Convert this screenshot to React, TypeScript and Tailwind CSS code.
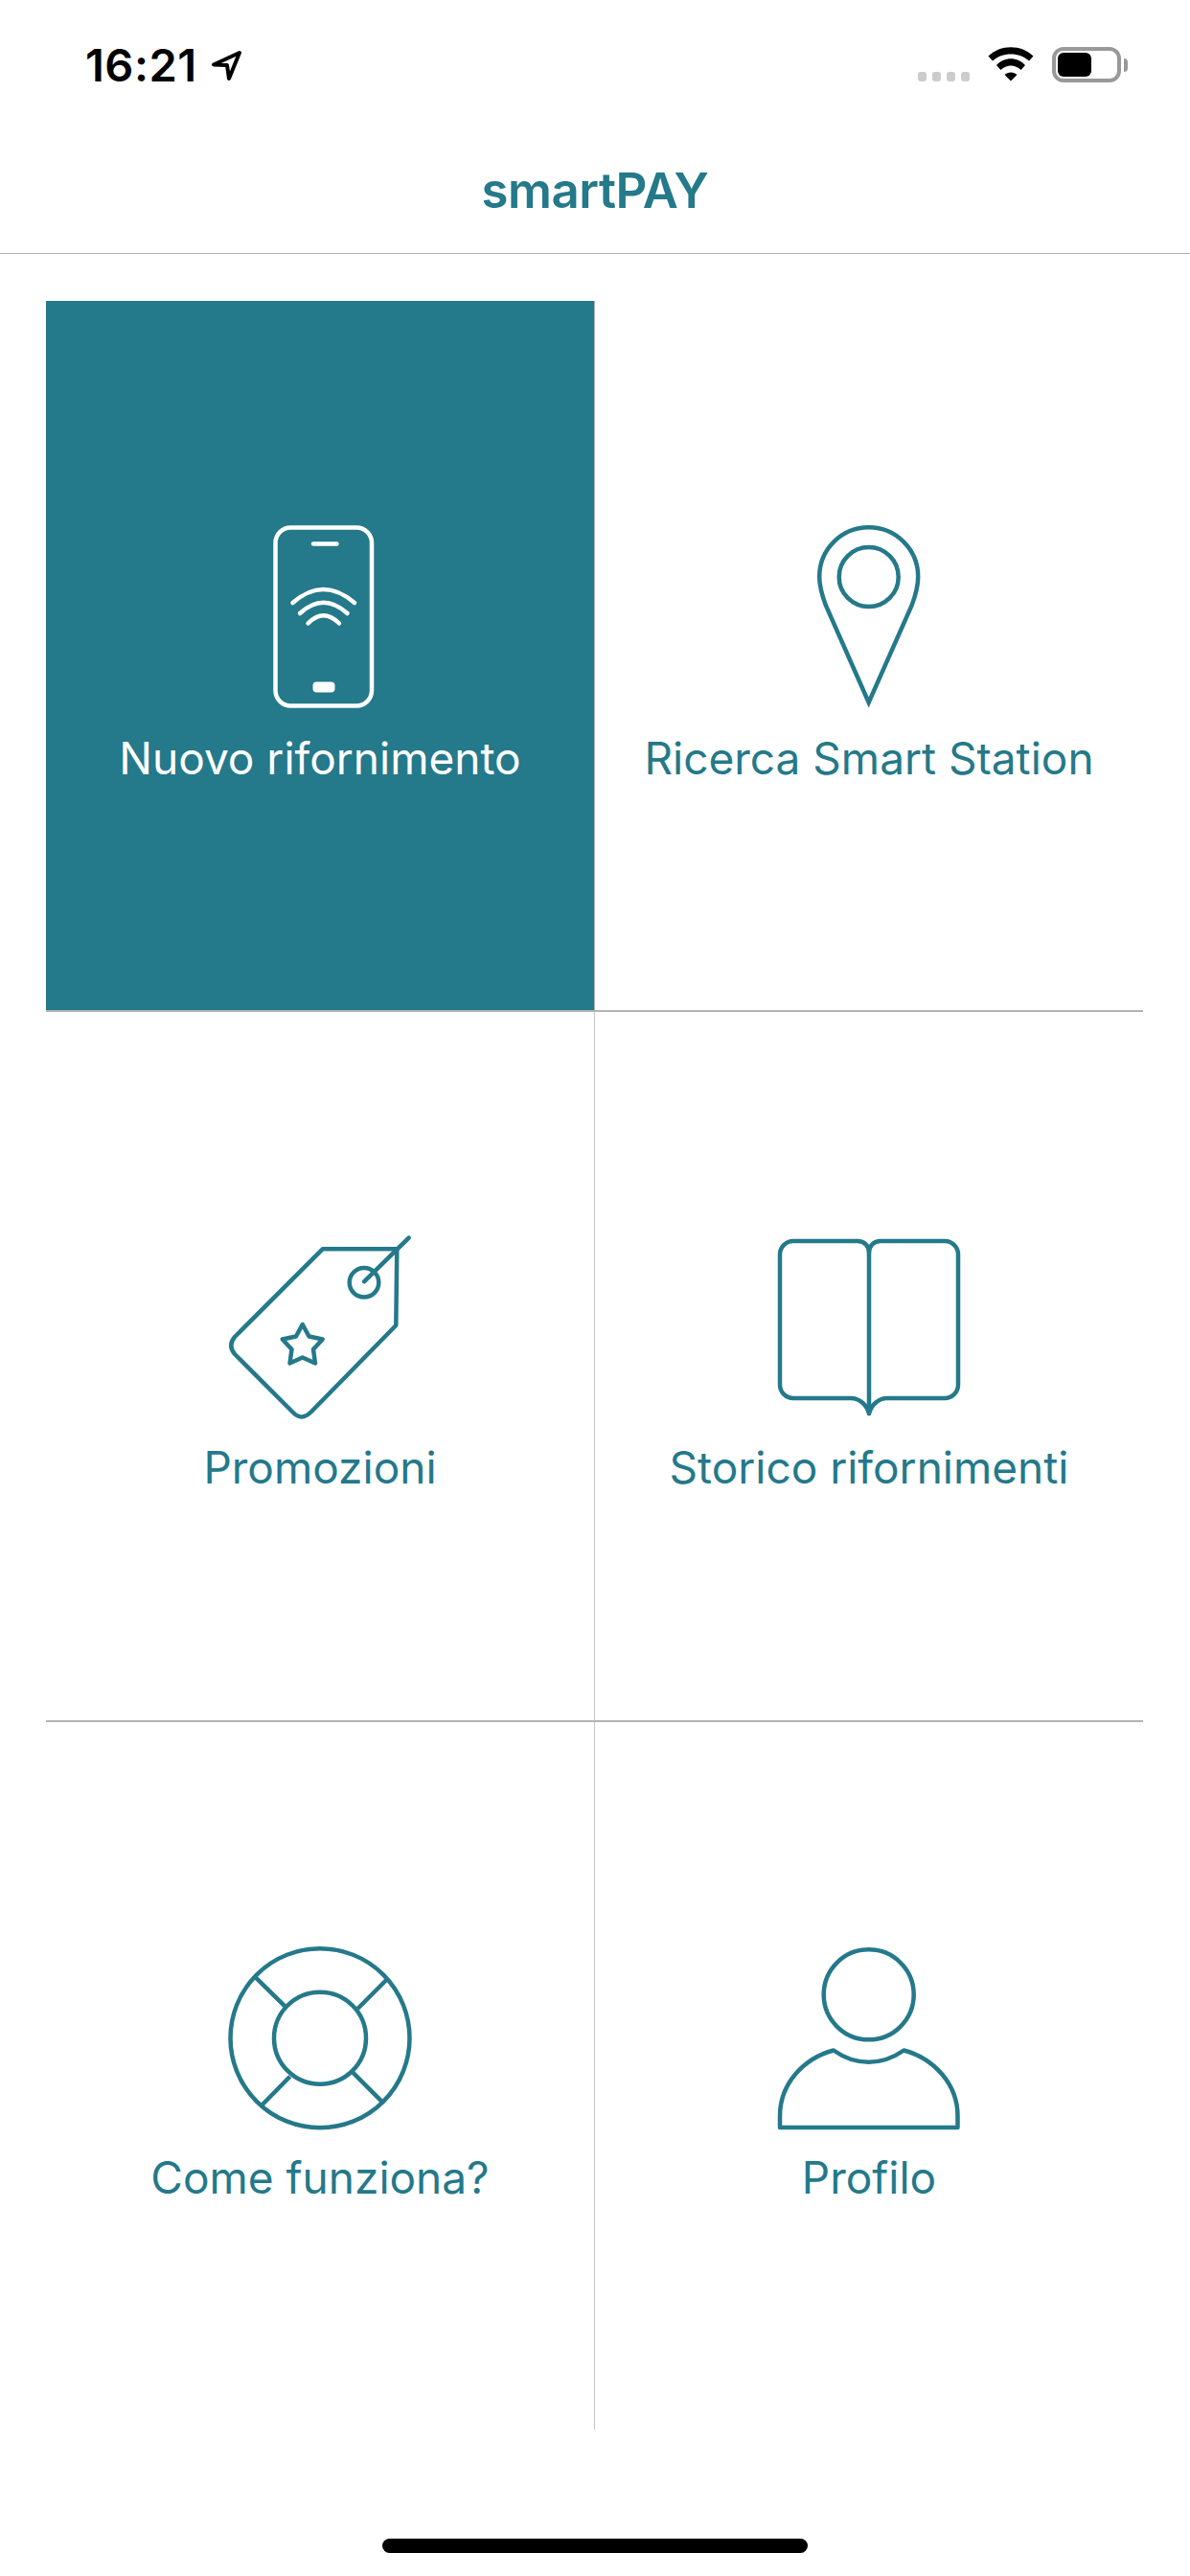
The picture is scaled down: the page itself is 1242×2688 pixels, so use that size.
import React from 'react';

const TEAL = '#24798a';

const Phone = () => (
  <svg width="240" height="240" viewBox="-26 -6 240 240" fill="none" stroke="#fff" strokeWidth="4.5" strokeLinecap="round">
    <rect x="47.5" y="30.5" width="100.5" height="186" rx="16" />
    <path d="M87 47.5H111.5" />
    <path d="M65.5 109Q97.5 81 130 109" />
    <path d="M73 120Q97.5 97.5 122.5 120" />
    <path d="M81.5 130.5Q97.5 114 114 130.5" />
    <rect x="86.5" y="191.5" width="23" height="11" rx="4" fill="#fff" stroke="none" />
  </svg>
);

const Pin = () => (
  <svg width="240" height="240" viewBox="-33 -6 240 240" fill="none" stroke={TEAL} strokeWidth="4.5" strokeLinejoin="miter">
    <path d="M86.7 213L42 112C37.5 100 35.2 92 35.2 81.7A51.5 51.5 0 0 1 138.2 81.7C138.2 92 136 100 131.5 112Z" />
    <circle cx="86.7" cy="82" r="31" />
  </svg>
);

const Tag = () => (
  <svg width="240" height="240" viewBox="-6 -16 240 240" fill="none" stroke={TEAL} strokeWidth="4.5" strokeLinecap="round" strokeLinejoin="round">
    <path d="M116.7 33.3H194.3L193.3 113L105 203C98 210 92 210 86 204L25 143C20 137 20 131 25 125Z" />
    <circle cx="160" cy="68.3" r="15.3" />
    <path d="M206.7 21.7L160 67.3" />
    <path d="M95.7 112L102.5 124.5L116.7 127.5L107 138L109 152.5L95.7 146.5L82.5 152.5L84.5 138L74.7 127.5L89 124.5Z" />
  </svg>
);

const Book = () => (
  <svg width="240" height="240" viewBox="-3 -16 240 240" fill="none" stroke={TEAL} strokeWidth="4.5" strokeLinecap="round" strokeLinejoin="round">
    <path d="M117 37C117 30 112 25 105 25H38A14 14 0 0 0 24 39V175A14 14 0 0 0 38 189H98C108 189 115 197 117 205C119 197 126 189 136 189H196A14 14 0 0 0 210 175V39A14 14 0 0 0 196 25H129C122 25 117 30 117 37Z" />
    <path d="M117 37V205" />
  </svg>
);

const Buoy = () => (
  <svg width="240" height="240" viewBox="-6 -15 240 240" fill="none" stroke={TEAL} strokeWidth="4.5">
    <circle cx="114" cy="116.7" r="93.5" />
    <circle cx="114" cy="116.7" r="48" />
    <path d="M46.7 53.3L77.3 83.3M183.3 56L153.3 86M82.7 156.7L54 186M148.3 152.7L178.3 182.7" />
  </svg>
);

const Person = () => (
  <svg width="240" height="240" viewBox="-3 -15 240 240" fill="none" stroke={TEAL} strokeWidth="4.5" strokeLinejoin="round">
    <circle cx="116.7" cy="71.3" r="47" />
    <path d="M24 198C24 165 48 138 80 129.5Q97 141.7 116.7 141.7Q136 141.7 153.3 129.5C185 138 209.5 165 209.5 198V210H24Z" />
  </svg>
);

const ITEMS = [
  { label: 'Nuovo rifornimento', icon: <Phone />, cls: 'pt-[200px] bg-[#24798a] text-white border-b-2 border-b-[#b3b3b3] border-r border-r-[#b3b3b3]' },
  { label: 'Ricerca Smart Station', icon: <Pin />, cls: 'pt-[200px] border-b-2 border-[#b3b3b3] text-[#24798a]' },
  { label: 'Promozioni', icon: <Tag />, cls: 'pt-[198px] border-b-2 border-b-[#b3b3b3] border-r border-r-[#c4c4c4] text-[#24798a]' },
  { label: 'Storico rifornimenti', icon: <Book />, cls: 'pt-[198px] border-b-2 border-[#b3b3b3] text-[#24798a]' },
  { label: 'Come funziona?', icon: <Buoy />, cls: 'pt-[198px] border-r border-[#c4c4c4] text-[#24798a]' },
  { label: 'Profilo', icon: <Person />, cls: 'pt-[198px] text-[#24798a]' },
];

export default function App() {
  return (
    <div className="w-[1242px] h-[2688px] bg-white overflow-hidden flex flex-col font-['Inter',sans-serif]">
      {/* status bar */}
      <div className="h-[134px] pt-[49px] pl-[89px] pr-[65px] flex justify-between items-start">
        <div className="flex items-center gap-[13px] h-[37px]">
          <span className="text-[47px] leading-[37px] font-semibold text-black tracking-[0.5px]">16:21</span>
          <svg width="34" height="34" viewBox="0 0 34 34" fill="none" stroke="#000" strokeWidth="4" strokeLinejoin="round">
            <path d="M31 4L4 16.5L18 17L20 31Z" />
          </svg>
        </div>
        <div className="flex items-end h-[37px]">
          <div className="flex gap-[6px] mb-[1px]">
            <div className="w-[9px] h-[10px] rounded-[3px] bg-[#cccccc]" />
            <div className="w-[9px] h-[10px] rounded-[3px] bg-[#cccccc]" />
            <div className="w-[9px] h-[10px] rounded-[3px] bg-[#cccccc]" />
            <div className="w-[9px] h-[10px] rounded-[3px] bg-[#cccccc]" />
          </div>
          <svg className="ml-[19px] mb-[1px]" width="48" height="36" viewBox="0 0 48 36" fill="#000">
            <path d="M0.5 9.5C13 -3 35 -3 47.5 9.5L43 14.5C33 5 15 5 5 14.5Z" />
            <path d="M9 19C17 10 31 10 39 19L34.5 24C28.5 18 19.5 18 13.5 24Z" />
            <path d="M17.5 29C21 25.5 27 25.5 30.5 29L24 35.5Z" />
          </svg>
          <div className="ml-[19px] w-[72px] h-[37px] border-[4px] border-[#999999] rounded-[12px] p-[2px] pr-[27px]">
            <div className="w-full h-full bg-black rounded-[6px]" />
          </div>
          <div className="ml-[3px] mb-[11px] w-[4px] h-[14px] bg-[#999999] rounded-r-[4px]" />
        </div>
      </div>

      {/* nav bar */}
      <div className="h-[131px] border-b border-[#b3b3b3] flex items-center justify-center">
        <span className="text-[51px] font-semibold text-[#24798a] tracking-[-0.5px]">smartPAY</span>
      </div>

      {/* menu */}
      <div className="ml-[48px] mt-[49px] w-[1145px] grid grid-cols-[573px_572px] grid-rows-[742px_741px_738px]">
        {ITEMS.map((item) => (
          <div key={item.label} className={`flex flex-col items-center ${item.cls}`}>
            {item.icon}
            <span className="mt-[7px] text-[46px] leading-[60px] whitespace-nowrap">{item.label}</span>
          </div>
        ))}
      </div>

      {/* home indicator */}
      <div className="mt-[114px] mx-auto w-[444px] h-[15px] rounded-full bg-black" />
    </div>
  );
}
